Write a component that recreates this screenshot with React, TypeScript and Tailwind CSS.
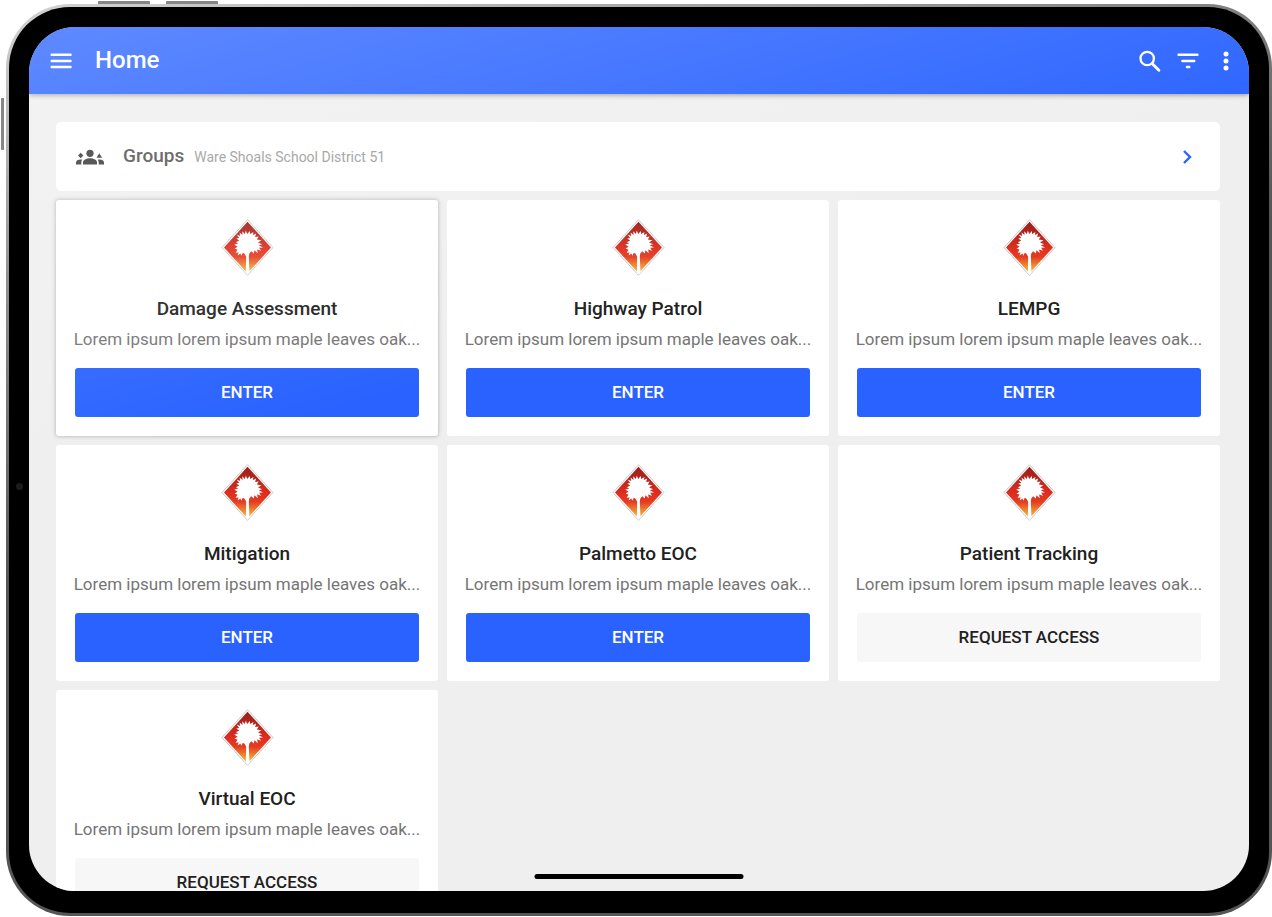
type Workspace = {
  name: string;
  description: string;
  hasAccess: boolean;
  raised?: boolean;
};

const description = 'Lorem ipsum lorem ipsum maple leaves oak...';

const workspaces: Workspace[] = [
  { name: 'Damage Assessment', description, hasAccess: true, raised: true },
  { name: 'Highway Patrol', description, hasAccess: true },
  { name: 'LEMPG', description, hasAccess: true },
  { name: 'Mitigation', description, hasAccess: true },
  { name: 'Palmetto EOC', description, hasAccess: true },
  { name: 'Patient Tracking', description, hasAccess: false },
  { name: 'Virtual EOC', description, hasAccess: false },
];

function PalmLogo() {
  return (
    <svg viewBox="34 28 158 172" className="h-[57px] w-[53px]" aria-hidden="true">
      <defs>
        <linearGradient id="palm-sky" x1="0" y1="0" x2="0" y2="1">
          <stop offset="0" stopColor="#9c1f1a" />
          <stop offset="0.25" stopColor="#b5261c" />
          <stop offset="0.48" stopColor="#dc2c1e" />
          <stop offset="0.68" stopColor="#e43c22" />
          <stop offset="0.85" stopColor="#ee8a30" />
          <stop offset="1" stopColor="#f8c04a" />
        </linearGradient>
      </defs>
      <path d="M113 30 190 114 113 198 36 114Z" fill="#fff" stroke="#bdbdbd" strokeWidth="2.5" />
      <path d="M113 36 184 114 113 192 42 114Z" fill="url(#palm-sky)" />
      <path
        fill="#fff"
        d="M108 190 109 142 104 133 99 130 94 139 92 132 83 138 86 129 77 130 83 121 74 117 83 112 73 105 85 102 78 98 88 93 79 87 88 85 80 75 91 79 89 69 98 76 97 65 105 73 108 63 112 73 120 64 121 73 131 67 129 76 139 72 136 82 147 81 141 90 155 92 145 99 157 104 147 107 160 114 148 115 154 124 142 120 144 131 134 122 132 132 124 125 118 133 117 142 119 190 113 196Z"
      />
    </svg>
  );
}

function MenuIcon() {
  return (
    <svg viewBox="0 0 28 28" className="size-7" fill="none" stroke="currentColor" strokeWidth="2.5" strokeLinecap="round" aria-hidden="true">
      <path d="M4.700 7.800h18.800M4.700 14h18.800M4.700 20h18.800" />
    </svg>
  );
}

function SearchIcon() {
  return (
    <svg viewBox="0 0 28 28" className="size-7" fill="none" stroke="currentColor" aria-hidden="true">
      <circle cx="11.2" cy="11.5" r="6.7" strokeWidth="2.3" />
      <path d="m16.3 16.8 6.6 6.4" strokeWidth="2.9" strokeLinecap="round" />
    </svg>
  );
}

function FilterIcon() {
  return (
    <svg viewBox="0 0 28 28" className="size-7" fill="none" stroke="currentColor" strokeWidth="2.5" strokeLinecap="round" aria-hidden="true">
      <path d="M4.600 7.800h18.800M8.400 14h11.800M13 20h2.200" />
    </svg>
  );
}

function MoreIcon() {
  return (
    <svg viewBox="0 0 28 28" className="size-7" fill="currentColor" aria-hidden="true">
      <circle cx="14" cy="6.9" r="2.5" />
      <circle cx="14" cy="14" r="2.5" />
      <circle cx="14" cy="21.1" r="2.5" />
    </svg>
  );
}

function ChevronIcon() {
  return (
    <svg viewBox="0 0 16 16" className="ml-auto size-4 text-[#2962ff]" fill="none" stroke="currentColor" strokeWidth="2.4" aria-hidden="true">
      <path d="m4 2 6 6-6 6" />
    </svg>
  );
}

function GroupsIcon() {
  return (
    <svg viewBox="0 0 28 16" className="h-4 w-7 shrink-0" fill="#363636" aria-hidden="true">
      <circle cx="14" cy="4.3" r="3.6" />
      <path d="M7 15.500v-1.900C7 11 10.200 9.300 14 9.300s7 1.700 7 4.300v1.900Z" />
      <path d="m4.700 3.800 2.700 2.700-2.700 2.700L2 6.500Z" />
      <path d="M0 15.500v-1.800c0-2 2-3.200 4.500-3.200.6 0 1.200.1 1.700.2-.6.900-.9 1.800-.9 2.900v1.900Z" />
      <path d="m23.300 4.300 2.800 4.500h-5.600Z" />
      <path d="M28 15.500v-1.800c0-2-2-3.200-4.500-3.200-.6 0-1.200.1-1.700.2.6.9.9 1.800.9 2.900v1.900Z" />
    </svg>
  );
}

function AppBar() {
  return (
    <header className="relative z-10 flex h-[67px] shrink-0 items-center bg-[#2962ff] pr-[9px] pl-[18px] text-white shadow-[0_1px_5px_rgba(0,0,0,0.4)]">
      <button type="button" aria-label="Open menu">
        <MenuIcon />
      </button>
      <h1 className="ml-5 pb-[2px] text-2xl font-medium">Home</h1>
      <div className="ml-auto flex items-center gap-[10px]">
        <button type="button" aria-label="Search">
          <SearchIcon />
        </button>
        <button type="button" aria-label="Filter">
          <FilterIcon />
        </button>
        <button type="button" aria-label="More options">
          <MoreIcon />
        </button>
      </div>
    </header>
  );
}

function GroupsBar() {
  return (
    <button type="button" className="flex h-[69px] w-full shrink-0 items-center rounded-[5px] bg-white pr-6 pl-5 text-left">
      <GroupsIcon />
      <span className="ml-[19px] text-[19px] font-medium text-[#505050]">Groups</span>
      <span className="ml-[10px] text-sm text-[#999]">Ware Shoals School District 51</span>
      <ChevronIcon />
    </button>
  );
}

function WorkspaceCard({ workspace }: { workspace: Workspace }) {
  return (
    <article
      className={`flex min-w-0 flex-col rounded-[3px] bg-white p-[19px] ${
        workspace.raised ? 'shadow-[0_0_4px_rgba(0,0,0,0.3)]' : ''
      }`}
    >
      <div className="flex justify-center">
        <PalmLogo />
      </div>
      <h2 className="mt-5 text-center text-[19px] leading-[26px] font-medium text-[#212121]">{workspace.name}</h2>
      <p className="-mx-2 mt-1 truncate text-center text-[17px] leading-[26px] text-[#757575]">{workspace.description}</p>
      <button
        type="button"
        className={`mt-4 h-[49px] rounded-[3px] text-[17px] font-medium ${
          workspace.hasAccess ? 'bg-[#2962ff] text-white' : 'bg-[#f7f7f7] text-[#212121]'
        }`}
      >
        {workspace.hasAccess ? 'ENTER' : 'REQUEST ACCESS'}
      </button>
    </article>
  );
}

export default function App() {
  return (
    <div className="relative h-screen overflow-hidden bg-white pt-1 pb-[1px] pl-[6px] font-[Roboto,sans-serif]">
      {/* hardware buttons */}
      <div className="absolute top-[1px] left-[98px] h-[3px] w-[52px] rounded-t-[1px] bg-[#858786]" />
      <div className="absolute top-[1px] left-[166px] h-[3px] w-[52px] rounded-t-[1px] bg-[#858786]" />
      <div className="absolute top-[98px] left-[1px] h-[52px] w-[3px] rounded-l-[1px] bg-[#858786]" />

      <div className="h-full rounded-[64px] bg-linear-[164deg,#d4d4d4_0%,#8f8f8f_22%,#555_45%] p-[3px]">
        <div className="relative h-full rounded-[61px] bg-black px-5 pt-5 pb-[22px]">
          <div className="absolute top-1/2 left-[7px] mt-[23px] size-[7px] rounded-full bg-[#1c1c1c]" />

          <div className="relative flex h-full flex-col overflow-hidden rounded-[46px] bg-[#efefef]">
            <AppBar />
            <main className="flex min-h-0 flex-1 flex-col gap-[9px] overflow-y-auto pt-7 pr-[29px] pl-[27px] [scrollbar-width:none]">
              <GroupsBar />
              <div className="grid grid-cols-3 gap-[9px]">
                {workspaces.map((workspace) => (
                  <WorkspaceCard key={workspace.name} workspace={workspace} />
                ))}
              </div>
            </main>

            {/* home indicator */}
            <div className="absolute bottom-3 left-1/2 z-20 h-[5px] w-[209px] -translate-x-1/2 rounded-full bg-black" />
            {/* glass reflection */}
            <div className="pointer-events-none absolute inset-0 z-30 bg-linear-[164deg,rgba(255,255,255,0.25)_0%,rgba(255,255,255,0)_39%]" />
          </div>
        </div>
      </div>
    </div>
  );
}
